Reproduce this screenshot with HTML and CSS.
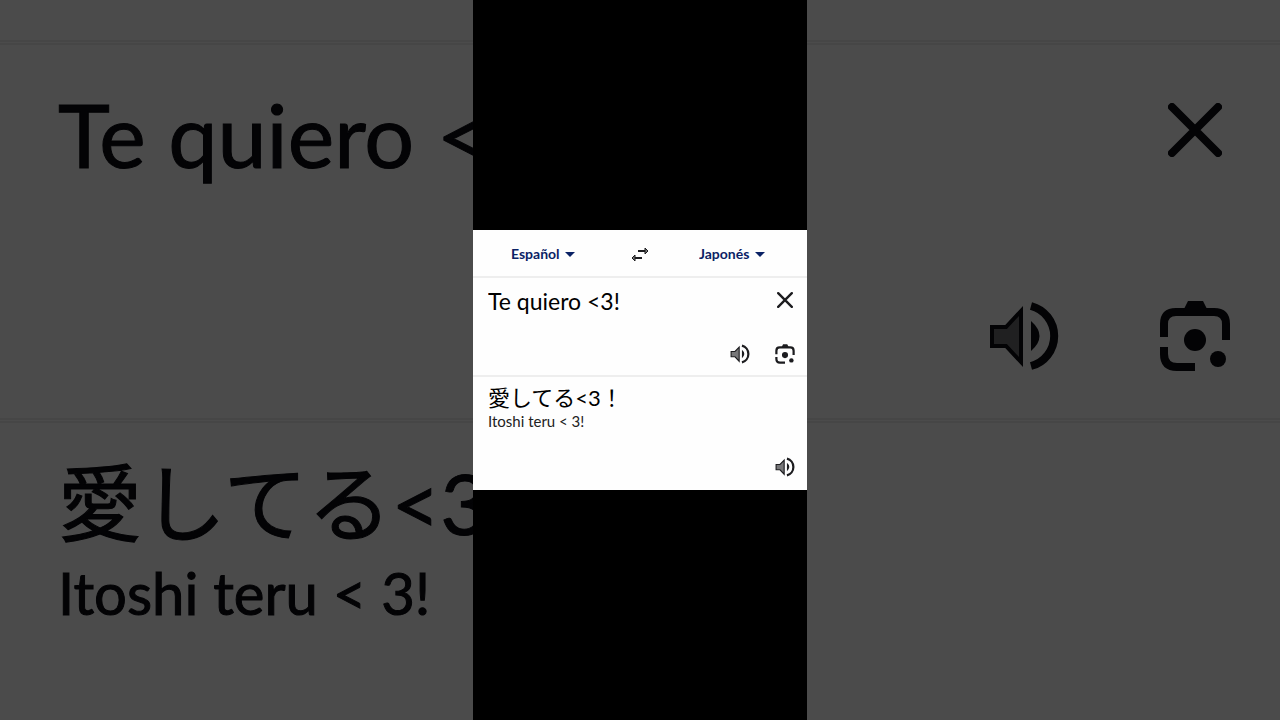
FILE: index.html
```html
<!DOCTYPE html>
<html lang="es">
<head>
    <meta charset="UTF-8">
    <meta name="viewport" content="width=device-width, initial-scale=1.0">
    <title>Traductor</title>
    <link rel="stylesheet" href="styles.css">
</head>
<body>
    <svg class="sprite" aria-hidden="true">
        <symbol id="icon-close" viewBox="0 0 54 54">
            <path d="M4 4L50 50M50 4L4 50" fill="none" stroke="currentColor" stroke-width="8" stroke-linecap="round"/>
        </symbol>
        <symbol id="icon-speaker" viewBox="0 0 72 72">
            <path d="M4 27H18L33 11V62L18 46H4Z" fill="currentColor" fill-opacity="0.6" stroke="currentColor" stroke-width="4"/>
            <path d="M43 21Q60 36 43 51Z" fill="currentColor"/>
            <path d="M43 6A31 31 0 0 1 43 66" fill="none" stroke="currentColor" stroke-width="8"/>
        </symbol>
        <symbol id="icon-camera" viewBox="0 0 72 72">
            <path d="M5 37V24Q5 12 17 12H55Q67 12 67 24V40M5 47V54Q5 67 18 67H36" fill="none" stroke="currentColor" stroke-width="8"/>
            <path d="M24 11L29 1H44L49 11Z" fill="currentColor"/>
            <circle cx="36" cy="40" r="11" fill="currentColor"/>
            <circle cx="59" cy="59" r="8" fill="currentColor"/>
        </symbol>
        <symbol id="icon-swap" viewBox="0 0 20 16">
            <path d="M8 5H16M12 12H4" fill="none" stroke="currentColor" stroke-width="2"/>
            <path d="M15 2L18 5L15 8ZM5 9L2 12L5 15Z" fill="#777" stroke="currentColor"/>
        </symbol>
    </svg>

    <div class="stage">
        <div class="backdrop" aria-hidden="true">
            <div class="backdrop-bar"></div>
            <div class="backdrop-source">
                <div class="backdrop-row">
                    <p class="backdrop-text">Te quiero &lt;3!</p>
                    <svg class="backdrop-close"><use href="#icon-close"/></svg>
                </div>
                <div class="backdrop-icons">
                    <svg class="backdrop-icon"><use href="#icon-speaker"/></svg>
                    <svg class="backdrop-icon"><use href="#icon-camera"/></svg>
                </div>
            </div>
            <div class="backdrop-result">
                <p class="backdrop-japanese" lang="ja">愛してる&lt;3！</p>
                <p class="backdrop-romaji">Itoshi teru &lt; 3!</p>
            </div>
        </div>

        <main class="phone">
            <div class="card">
                <div class="languages">
                    <div class="language">
                        <select aria-label="Idioma de origen">
                            <option>Español</option>
                        </select>
                        <span class="arrow"></span>
                    </div>
                    <button class="icon-button" type="button" aria-label="Intercambiar idiomas">
                        <svg class="swap"><use href="#icon-swap"/></svg>
                    </button>
                    <div class="language target">
                        <select aria-label="Idioma de destino">
                            <option>Japonés</option>
                        </select>
                        <span class="arrow"></span>
                    </div>
                </div>

                <section class="source">
                    <div class="source-row">
                        <input class="source-text" type="text" value="Te quiero &lt;3!" aria-label="Texto de origen">
                        <button class="icon-button close-button" type="button" aria-label="Borrar">
                            <svg class="close"><use href="#icon-close"/></svg>
                        </button>
                    </div>
                    <div class="actions">
                        <button class="icon-button" type="button" aria-label="Escuchar original">
                            <svg class="icon"><use href="#icon-speaker"/></svg>
                        </button>
                        <button class="icon-button" type="button" aria-label="Buscar con cámara">
                            <svg class="icon"><use href="#icon-camera"/></svg>
                        </button>
                    </div>
                </section>

                <section class="result">
                    <div>
                        <p class="japanese" lang="ja">愛してる&lt;3！</p>
                        <p class="romaji">Itoshi teru &lt; 3!</p>
                    </div>
                    <div class="actions">
                        <button class="icon-button" type="button" aria-label="Escuchar traducción">
                            <svg class="icon"><use href="#icon-speaker"/></svg>
                        </button>
                    </div>
                </section>
            </div>
        </main>
    </div>
</body>
</html>
```
FILE: styles.css
```css
* {
    box-sizing: border-box;
}
body {
    margin: 0;
    background: #4b4b4b;
    color: #000;
    font-family: Lato, "Noto Sans CJK JP", sans-serif;
}
p {
    margin: 0;
}
.sprite {
    display: none;
}
.stage {
    display: grid;
    height: 100vh;
    overflow: hidden;
}
.backdrop, .phone {
    grid-area: 1 / 1;
    min-width: 0;
}

/* enlarged, dimmed copy behind the phone */
.backdrop {
    display: grid;
    grid-template-rows: 45px 378px 1fr;
    color: #030305;
    white-space: nowrap;
    overflow: hidden;
}
.backdrop-bar, .backdrop-source {
    border-bottom: 5px double #464646;
}
.backdrop-source {
    display: flex;
    flex-direction: column;
    justify-content: space-between;
    padding: 33px 49px 46px 58px;
}
.backdrop-row {
    display: flex;
    justify-content: space-between;
    align-items: flex-start;
    padding-right: 9px;
}
.backdrop-text {
    font-size: 88px;
    line-height: 112px;
    -webkit-text-stroke: 1px;
}
.backdrop-close {
    width: 54px;
    height: 54px;
    margin-top: 25px;
}
.backdrop-icons {
    display: flex;
    justify-content: flex-end;
    gap: 99px;
}
.backdrop-icon {
    width: 72px;
    height: 72px;
}
.backdrop-result {
    padding: 27px 58px;
}
.backdrop-japanese {
    font-size: 84px;
    line-height: 106px;
    -webkit-text-stroke: 1px;
}
.backdrop-romaji {
    font-size: 58px;
    line-height: 74px;
    -webkit-text-stroke: 1px;
}

.phone {
    display: flex;
    flex-direction: column;
    justify-content: center;
    justify-self: center;
    width: 334px;
    max-width: 100%;
    background: #000;
}
.card {
    background: #fefefe;
}
.languages {
    display: grid;
    grid-template-columns: 1fr 20px 1fr;
    align-items: center;
    height: 48px;
    padding: 2px 38px 0;
    border-bottom: 2px solid #eee;
}
.language {
    display: flex;
    align-items: center;
    gap: 5px;
}
.target {
    justify-content: flex-end;
    padding-right: 4px;
}
.language select {
    appearance: none;
    padding: 0;
    border: 0;
    background: none;
    color: #0b2265;
    font-family: inherit;
    font-size: 14px;
    font-weight: 700;
    line-height: 20px;
    cursor: pointer;
}
.arrow {
    border: 5px solid transparent;
    border-top-color: #0b2265;
    border-bottom: 0;
    pointer-events: none;
}
.icon-button {
    display: flex;
    padding: 0;
    border: 0;
    background: none;
    color: #1c1c1f;
    cursor: pointer;
}
.swap {
    width: 20px;
    height: 16px;
}
.source, .result {
    display: flex;
    flex-direction: column;
    justify-content: space-between;
    padding: 7px 12px 11px 15px;
}
.source {
    height: 99px;
    border-bottom: 2px solid #eee;
}
.result {
    height: 113px;
    padding-bottom: 13px;
}
.source-row {
    display: flex;
    align-items: flex-start;
}
.source-text {
    flex: 1;
    min-width: 0;
    padding: 0;
    border: 0;
    background: none;
    color: #000;
    font-family: inherit;
    font-size: 23px;
    line-height: 32px;
}
.close-button {
    padding: 7px 2px 0 0;
}
.close {
    width: 16px;
    height: 16px;
}
.actions {
    display: flex;
    justify-content: flex-end;
    gap: 25px;
}
.icon {
    width: 20px;
    height: 20px;
}
.japanese {
    font-size: 22px;
    line-height: 28px;
}
.romaji {
    color: #222;
    font-size: 15px;
    line-height: 18px;
}
```
